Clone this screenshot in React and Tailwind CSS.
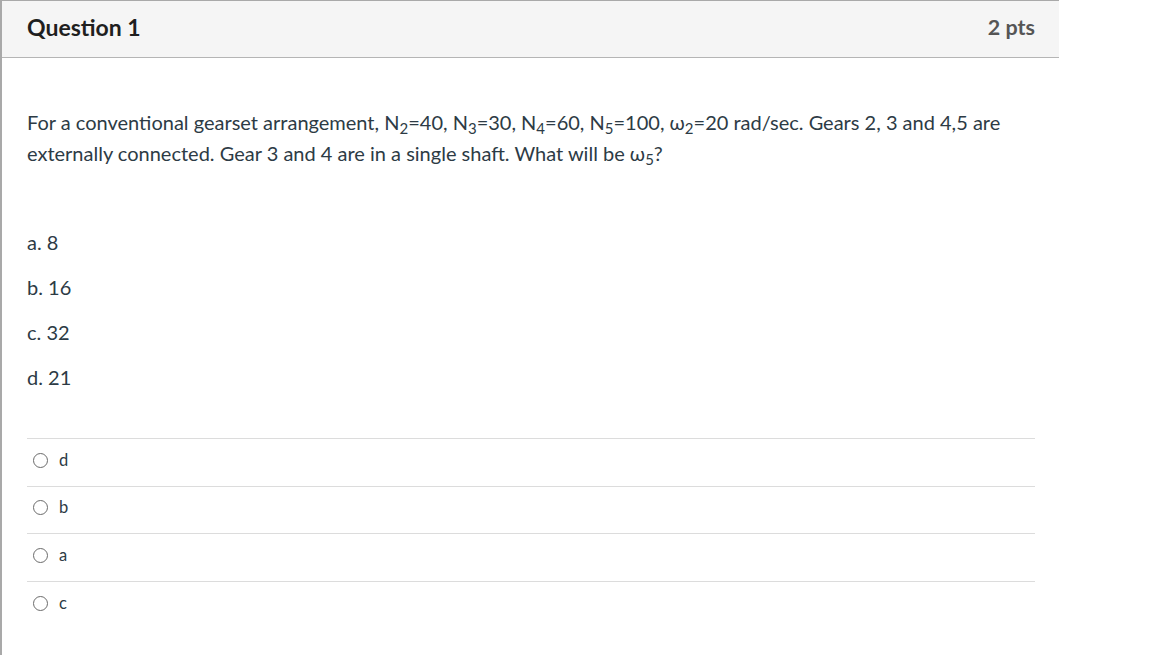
import React from "react";

const answers = ["d", "b", "a", "c"];

function Sub({ children }) {
  return <sub className="text-[15px]">{children}</sub>;
}

export default function App() {
  return (
    <div className="min-h-[655px] bg-white font-['Lato','Noto_Sans',sans-serif] text-[#2d3b45]">
      <div className="w-[1059px] min-h-[655px] border-l-2 border-t border-[#a9a9a9]">
        <div className="h-[57px] bg-[#f5f5f5] border-b border-[#b5b5b5] flex items-center justify-between pl-[25px] pr-[24px] pb-[3px]">
          <h2 className="text-[23px] font-bold text-[#1f1f1f]">Question 1</h2>
          <span className="text-[21.5px] font-bold text-[#555555]">2 pts</span>
        </div>

        <div className="pl-[25px] pr-[24px] pt-[49px]">
          <p className="text-[20px] leading-[31px]">
            For a conventional gearset arrangement, N<Sub>2</Sub>=40, N<Sub>3</Sub>=30, N<Sub>4</Sub>=60, N
            <Sub>5</Sub>=100, ω<Sub>2</Sub>=20 rad/sec. Gears 2, 3 and 4,5 are externally connected. Gear 3 and 4 are
            in a single shaft. What will be ω<Sub>5</Sub>?
          </p>

          <div className="mt-[58px] flex flex-col gap-[14px] text-[20px] leading-[31px]">
            <div>a. 8</div>
            <div>b. 16</div>
            <div>c. 32</div>
            <div>d. 21</div>
          </div>

          <div className="mt-[45px] border-t border-[#dcdcdc]">
            {answers.map((a) => (
              <label
                key={a}
                className="h-[47.5px] flex items-center border-b border-[#dcdcdc] pl-[6px] pb-[4px] last:border-b-0"
              >
                <span className="w-[15px] h-[15px] rounded-full border border-[#6b6b6b] bg-white" />
                <span className="ml-[11px] text-[16.5px] text-[#2d3b45]">{a}</span>
              </label>
            ))}
          </div>
        </div>
      </div>
    </div>
  );
}
